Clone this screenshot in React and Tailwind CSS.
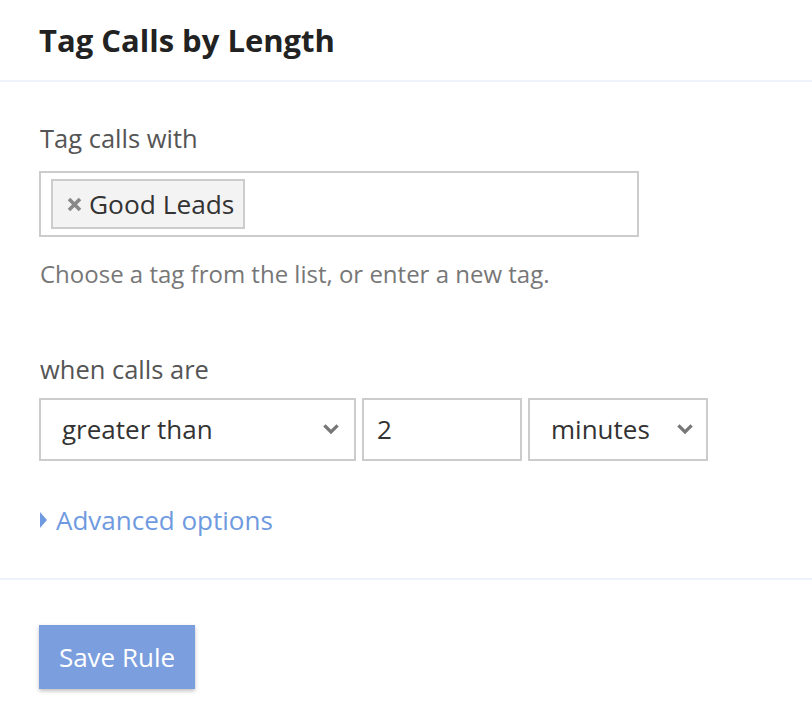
import React from "react";

function Chevron() {
  return (
    <svg width="16" height="11" viewBox="0 0 16 11" className="shrink-0">
      <path d="M2.5 2.5 L8 8 L13.5 2.5" fill="none" stroke="#777" strokeWidth="3.2" strokeLinecap="square" />
    </svg>
  );
}

export default function App() {
  return (
    <div className="w-[812px] h-[722px] bg-white text-[#333]" style={{ fontFamily: '"Open Sans", sans-serif' }}>
      <div className="px-10 pt-[20px] h-[82px] border-b-2 border-[#eef2fb]">
        <h1 className="text-[31px] font-bold text-[#222] leading-[40px] -ml-px">Tag Calls by Length</h1>
      </div>
      <div className="px-[39px] pt-[39px] h-[498px] border-b-2 border-[#eef2fb]">
        <div className="text-[25.5px] text-[#555] leading-[34px] pl-px">Tag calls with</div>
        <div className="mt-[16px] w-[600px] h-[66px] border-2 border-[#ccc] px-[10px] flex items-center">
          <div className="h-[50px] w-[194px] border-2 border-[#ccc] bg-[#f3f3f3] flex items-center pl-[14px] gap-[7px]">
            <svg width="15" height="15" viewBox="0 0 15 15" className="shrink-0">
              <path d="M2 2 L13 13 M13 2 L2 13" stroke="#888" strokeWidth="3.6" strokeLinecap="butt" />
            </svg>
            <span className="text-[26.3px] text-[#333] leading-none">Good Leads</span>
          </div>
        </div>
        <div className="mt-[22px] text-[24px] text-[#777] leading-[30px] pl-px">Choose a tag from the list, or enter a new tag.</div>
        <div className="mt-[63px] text-[25.5px] text-[#555] leading-[34px] pl-px">when calls are</div>
        <div className="mt-[12px] flex gap-[6px]">
          <div className="w-[317px] h-[63px] border-2 border-[#ccc] flex items-center justify-between pl-[21px] pr-[15px]">
            <span className="text-[26px] text-[#333]">greater than</span>
            <Chevron />
          </div>
          <div className="w-[160px] h-[63px] border-2 border-[#ccc] flex items-center pl-[13px]">
            <span className="text-[26px] text-[#333]">2</span>
          </div>
          <div className="w-[180px] h-[63px] border-2 border-[#ccc] flex items-center justify-between pl-[21px] pr-[13px]">
            <span className="text-[26px] text-[#333]">minutes</span>
            <Chevron />
          </div>
        </div>
        <div className="mt-[43px] flex items-center gap-[8px] text-[#6f9ae0]">
          <svg width="9" height="16" viewBox="0 0 9 16">
            <path d="M1 0 L8 8 L1 16 Z" fill="#6f9ae0" />
          </svg>
          <span className="text-[26px] leading-[32px]">Advanced options</span>
        </div>
      </div>
      <div className="px-[39px] pt-[45px]">
        <button className="w-[156px] h-[64px] bg-[#7a9ede] text-white text-[26px] shadow-[0_2px_4px_rgba(0,0,0,0.25)]">
          Save Rule
        </button>
      </div>
    </div>
  );
}
